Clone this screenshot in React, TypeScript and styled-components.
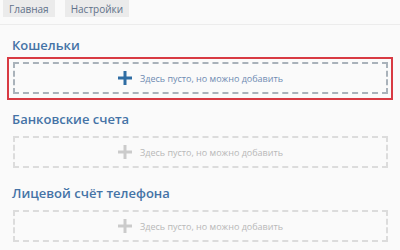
import styled, { createGlobalStyle } from "styled-components";

const GlobalStyle = createGlobalStyle`
  body {
    margin: 0;
    background: #fafafa;
    font-family: "Open Sans", "DejaVu Sans", sans-serif;
  }
`

const sections = [
  { title: 'Кошельки', active: true },
  { title: 'Банковские счета', active: false },
  { title: 'Лицевой счёт телефона', active: false },
]

const PlusIcon = ({ color }: { color: string }) => (
  <svg width="14" height="14" viewBox="0 0 14 14">
    <path d="M7 0v14M0 7h14" stroke={color} strokeWidth="3" />
  </svg>
)

const App = () => {
  return (
    <Page>
      <GlobalStyle />
      <TabBar>
        <Tab>Главная</Tab>
        <Tab>Настройки</Tab>
      </TabBar>
      <Sections>
        {sections.map((s) => (
          <Section key={s.title}>
            <Heading>{s.title}</Heading>
            <Highlight active={s.active}>
              <EmptyBox active={s.active}>
                <PlusIcon color={s.active ? '#2f6da3' : '#cbcbcb'} />
                <EmptyText active={s.active}>Здесь пусто, но можно добавить</EmptyText>
              </EmptyBox>
            </Highlight>
          </Section>
        ))}
      </Sections>
    </Page>
  )
}

const Page = styled.div`
  width: 400px;
  height: 250px;
  overflow: hidden;
`

const TabBar = styled.div`
  display: flex;
  gap: 10px;
  padding: 0 0 0 3px;
  height: 24px;
  border-bottom: 1px solid #ececec;
`

const Tab = styled.span`
  height: 17px;
  line-height: 19px;
  padding: 0 6px;
  background: #ebebeb;
  color: #5f7189;
  font-size: 10px;
`

const Sections = styled.div`
  display: flex;
  flex-direction: column;
  gap: 9px;
  padding: 10px 7px 0;
`

const Section = styled.div`
  display: flex;
  flex-direction: column;
  gap: 2px;
`

const Heading = styled.div`
  padding-left: 5px;
  font-size: 13px;
  line-height: 20px;
  font-weight: 600;
  color: #4573a6;
`

const Highlight = styled.div<{ active: boolean }>`
  border: 2px solid ${(p) => (p.active ? '#d83a43' : 'transparent')};
  padding: 3px 3px 4px 4px;
`

const EmptyBox = styled.div<{ active: boolean }>`
  height: 28px;
  display: flex;
  align-items: center;
  justify-content: center;
  gap: 8px;
  border: 2px dashed ${(p) => (p.active ? '#a9b2ba' : '#dcdcdc')};
`

const EmptyText = styled.span<{ active: boolean }>`
  font-size: 9px;
  color: ${(p) => (p.active ? '#6f8bb2' : '#b8b8b8')};
`

export default App
